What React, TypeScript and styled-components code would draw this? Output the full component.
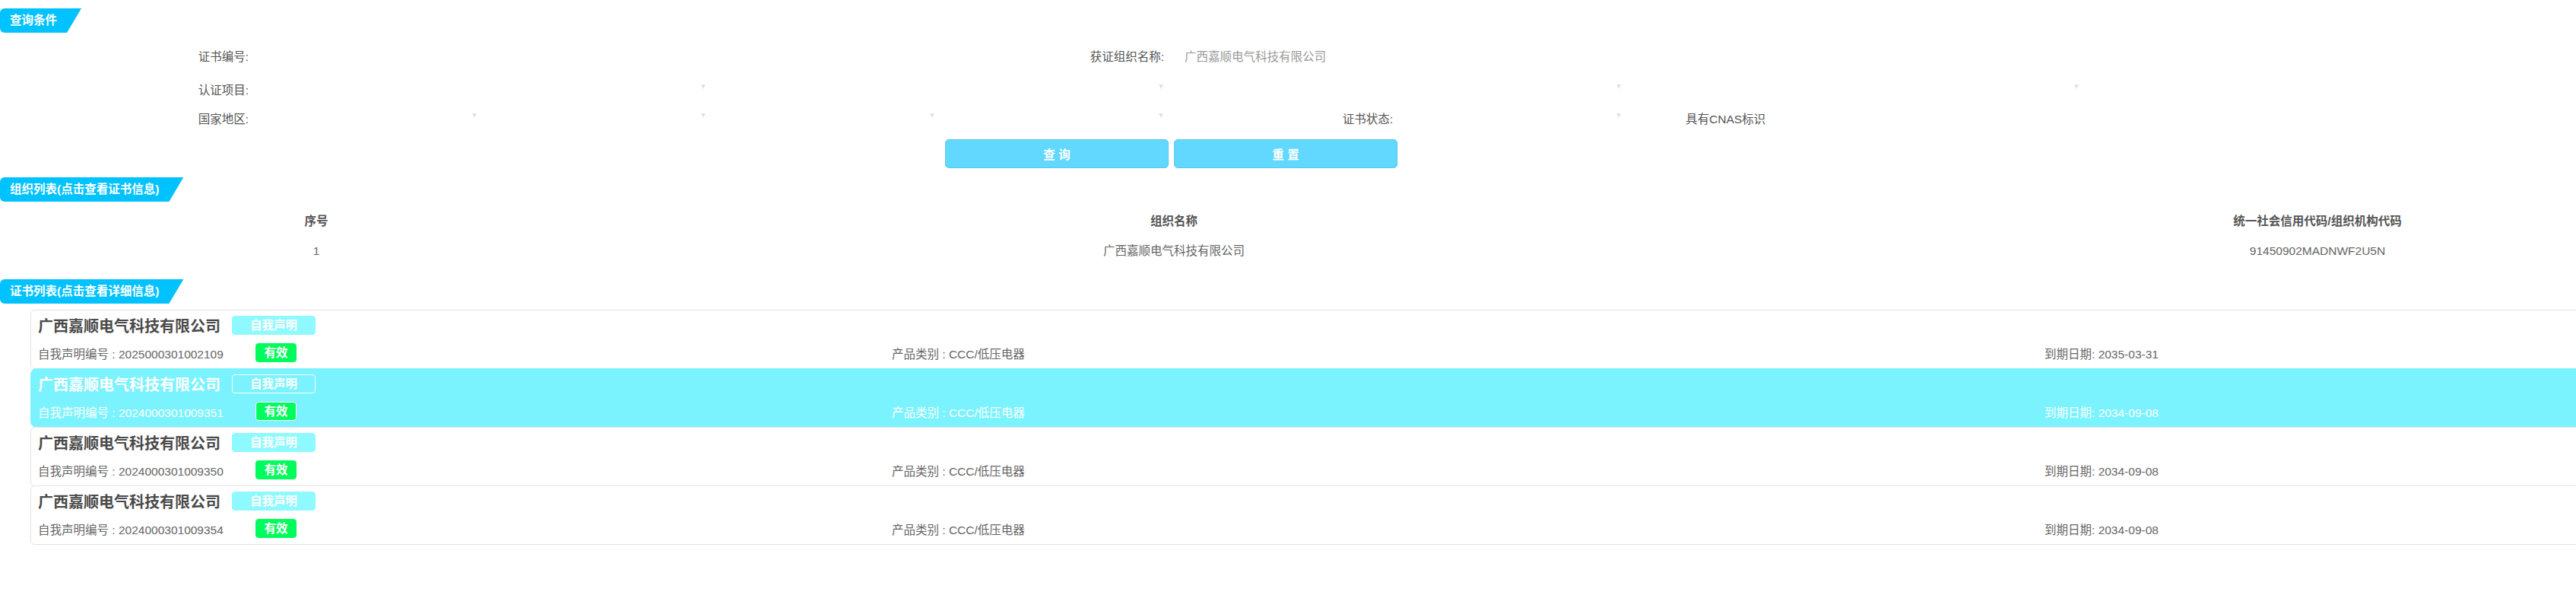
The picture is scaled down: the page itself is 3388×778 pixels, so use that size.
import React from 'react';
import styled, { createGlobalStyle } from 'styled-components';

const GlobalStyle = createGlobalStyle`
  html, body {
    margin: 0;
    padding: 0;
    background: #fff;
    overflow: hidden;
  }
  body {
    font-family: "Liberation Sans", Arial, "Noto Sans CJK SC", sans-serif;
    font-size: 15.5px;
    color: #555;
  }
`;

type Cert = {
  code: string;
  expire: string;
};

const certs: Cert[] = [
  { code: '2025000301002109', expire: '2035-03-31' },
  { code: '2024000301009351', expire: '2034-09-08' },
  { code: '2024000301009350', expire: '2034-09-08' },
  { code: '2024000301009354', expire: '2034-09-08' },
];

const company = '广西嘉顺电气科技有限公司';

const App: React.FC = () => {
  return (
    <Page>
      <GlobalStyle />
      <SectionTag>查询条件</SectionTag>

      <FormGrid>
        <FieldLabel $col={1} $row={1}>证书编号:</FieldLabel>
        <TextField $col={2} $span={3} $row={1} />
        <FieldLabel $col={5} $row={1}>获证组织名称:</FieldLabel>
        <TextField $col={6} $span={4} $row={1}>{company}</TextField>

        <FieldLabel $col={1} $row={2}>认证项目:</FieldLabel>
        {[2, 4, 6, 8].map(c => (
          <SelectBox key={c} $col={c} $span={2} $row={2}><Arrow /></SelectBox>
        ))}

        <FieldLabel $col={1} $row={3}>国家地区:</FieldLabel>
        {[2, 3, 4, 5].map(c => (
          <SelectBox key={c} $col={c} $span={1} $row={3}><Arrow /></SelectBox>
        ))}
        <FieldLabel $col={6} $row={3}>证书状态:</FieldLabel>
        <SelectBox $col={7} $span={1} $row={3}><Arrow /></SelectBox>
        <CheckLabel $col={8} $row={3}>具有CNAS标识</CheckLabel>
      </FormGrid>

      <ButtonRow>
        <ActionButton>查 询</ActionButton>
        <ActionButton>重 置</ActionButton>
      </ButtonRow>

      <SectionTag $top={12}>组织列表(点击查看证书信息)</SectionTag>

      <OrgTable>
        <HeadCell>序号</HeadCell>
        <HeadCell>组织名称</HeadCell>
        <HeadCell $shift={452}>统一社会信用代码/组织机构代码</HeadCell>
        <DataCell>1</DataCell>
        <DataCell>{company}</DataCell>
        <DataCell $shift={452}>91450902MADNWF2U5N</DataCell>
      </OrgTable>

      <SectionTag $top={18}>证书列表(点击查看详细信息)</SectionTag>

      <CertList>
        {certs.map((c, i) => {
          const active = i === 1;
          return (
            <CertCard key={c.code} $active={active}>
              <CardRow>
                <CompanyName $active={active}>{company}</CompanyName>
                <Badge $kind="type" $active={active}>自我声明</Badge>
              </CardRow>
              <CardRow>
                <CodeCell $active={active}>自我声明编号 : {c.code}</CodeCell>
                <Badge $kind="ok" $active={active}>有效</Badge>
                <ProductCell $active={active}>产品类别 : CCC/低压电器</ProductCell>
                <InfoText $active={active}>到期日期: {c.expire}</InfoText>
              </CardRow>
            </CertCard>
          );
        })}
      </CertList>
    </Page>
  );
};

export default App;

const Page = styled.div`
  padding-top: 11px;
  width: 3388px;
`;

const SectionTag = styled.div<{ $top?: number }>`
  display: inline-block;
  margin-top: ${p => p.$top || 0}px;
  height: 32px;
  line-height: 32px;
  padding: 0 32px 0 13px;
  background: #00c2fe;
  color: #fff;
  font-weight: bold;
  font-size: 15.5px;
  border-radius: 6px 0 0 6px;
  clip-path: polygon(0 0, 100% 0, calc(100% - 19px) 100%, 0 100%);
`;

const FormGrid = styled.div`
  display: grid;
  grid-template-columns: 327px repeat(10, 301px);
  grid-template-rows: 38px 44px 38px;
  align-items: end;
  margin-top: 13px;
`;

type Cell = { $col: number; $row: number; $span?: number };

const FieldLabel = styled.div<Cell>`
  grid-column: ${p => p.$col} / span ${p => p.$span || 1};
  grid-row: ${p => p.$row};
  height: 38px;
  line-height: 38px;
  text-align: right;
  color: #555;
  white-space: nowrap;
`;

const TextField = styled.div<Cell>`
  grid-column: ${p => p.$col} / span ${p => p.$span || 1};
  grid-row: ${p => p.$row};
  height: 38px;
  line-height: 38px;
  padding-left: 27px;
  color: #9a9a9a;
`;

const SelectBox = styled.div<Cell>`
  grid-column: ${p => p.$col} / span ${p => p.$span || 1};
  grid-row: ${p => p.$row};
  position: relative;
  height: 38px;
`;

const Arrow = styled.span`
  position: absolute;
  right: 1px;
  top: 11px;
  width: 0;
  height: 0;
  border-left: 3px solid transparent;
  border-right: 3px solid transparent;
  border-top: 6px solid #e2e2e2;
`;

const CheckLabel = styled.div<Cell>`
  grid-column: ${p => p.$col};
  grid-row: ${p => p.$row};
  height: 38px;
  line-height: 38px;
  padding-left: 84px;
  color: #555;
  white-space: nowrap;
`;

const ButtonRow = styled.div`
  display: flex;
  gap: 7px;
  padding-left: 1243px;
  margin-top: 7px;
`;

const ActionButton = styled.button`
  width: 294px;
  height: 38px;
  background: #62d8ff;
  border: 1px solid #56c9f2;
  border-radius: 5px;
  color: #fff;
  font-family: "Liberation Sans", Arial, "Noto Sans CJK SC", sans-serif;
  font-size: 15.5px;
  font-weight: bold;
  padding: 0;
`;

const OrgTable = styled.div`
  display: grid;
  grid-template-columns: 832px 1424px 1fr;
  grid-template-rows: 40px 38px;
  margin-top: 6px;
`;

const HeadCell = styled.div<{ $shift?: number }>`
  padding-left: ${p => p.$shift || 0}px;
  line-height: 40px;
  text-align: center;
  font-weight: bold;
  color: #555;
`;

const DataCell = styled.div<{ $shift?: number }>`
  padding-left: ${p => p.$shift || 0}px;
  line-height: 38px;
  text-align: center;
  color: #666;
`;

const CertList = styled.div`
  margin: 8px 0 0 40px;
  width: 3360px;
`;

const CertCard = styled.div<{ $active: boolean }>`
  display: flex;
  flex-direction: column;
  gap: 11px;
  padding: 7px 0 8px 9px;
  border: 1px solid ${p => (p.$active ? '#7af3ff' : '#e2e2e2')};
  border-radius: ${p => (p.$active ? 8 : 6)}px;
  background: ${p => (p.$active ? '#7af3ff' : '#fff')};
  & + & {
    margin-top: -1px;
  }
`;

const CardRow = styled.div`
  display: flex;
  align-items: center;
  height: 25px;
`;

const CompanyName = styled.div<{ $active: boolean }>`
  font-size: 20px;
  font-weight: bold;
  color: ${p => (p.$active ? '#fff' : '#4a4a4a')};
  margin-right: 15px;
`;

const Badge = styled.div<{ $kind: 'type' | 'ok'; $active: boolean }>`
  box-sizing: border-box;
  width: ${p => (p.$kind === 'type' ? 110 : 54)}px;
  height: 25px;
  line-height: 23px;
  text-align: center;
  border-radius: 4px;
  font-weight: bold;
  color: #fff;
  background: ${p =>
    p.$kind === 'ok' ? '#00fb5c' : p.$active ? 'transparent' : '#8ef9ff'};
  border: 1px solid
    ${p => (p.$active ? '#fff' : p.$kind === 'ok' ? '#00fb5c' : '#8ef9ff')};
`;

const InfoText = styled.div<{ $active: boolean }>`
  color: ${p => (p.$active ? '#fff' : '#666')};
  white-space: nowrap;
`;

const CodeCell = styled(InfoText)`
  width: 286px;
`;

const ProductCell = styled(InfoText)`
  margin-left: 783px;
  width: 1516px;
`;
